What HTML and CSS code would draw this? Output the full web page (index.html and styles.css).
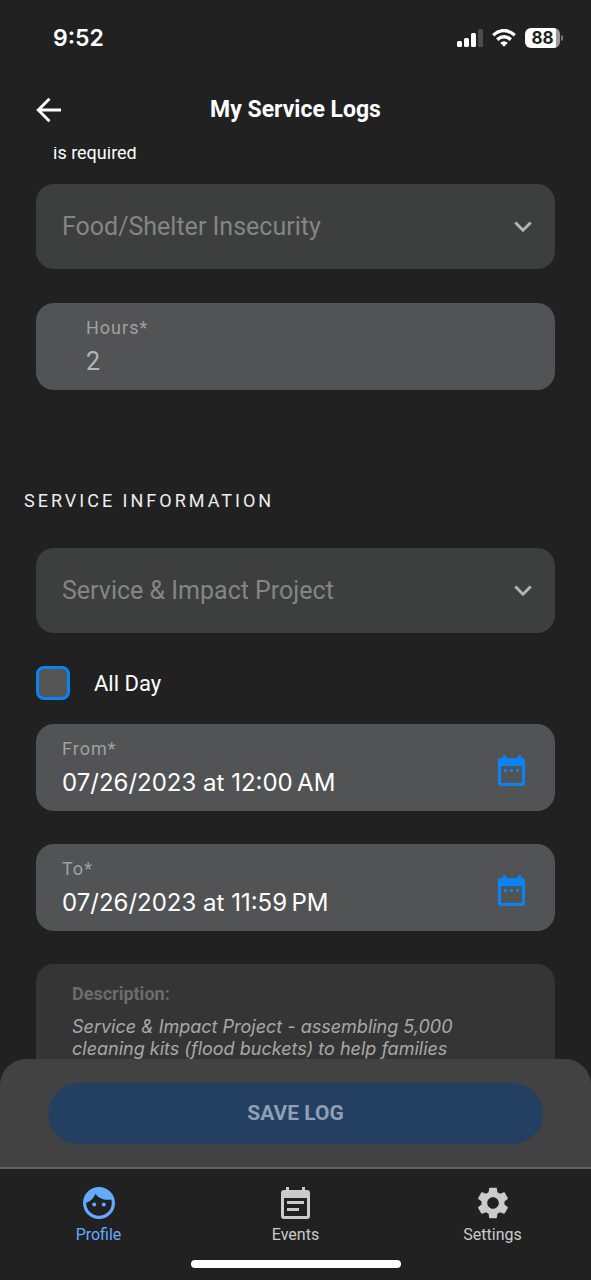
FILE: index.html
```html
<!DOCTYPE html>
<html lang="en">
<head>
<meta charset="utf-8">
<meta name="viewport" content="width=device-width, initial-scale=1">
<title>My Service Logs</title>
<link rel="stylesheet" href="styles.css">
</head>
<body>
<div class="app">
  <div class="status">
    <span class="clock">9:52</span>
    <div class="indicators">
      <svg class="signal" viewBox="0 0 26 18" width="26" height="18" aria-hidden="true">
        <g fill="#fff"><rect x="0" y="12" width="5" height="6" rx="1.5"/><rect x="7" y="9" width="5" height="9" rx="1.5"/><rect x="14" y="4" width="5" height="14" rx="1.5"/></g>
        <rect x="21" y="0" width="5" height="18" rx="1.5" fill="#4c4c4c"/>
      </svg>
      <svg class="wifi" viewBox="0 0 24 18" width="24" height="18" aria-hidden="true">
        <g fill="none" stroke="#fff" stroke-width="3.4"><path d="M1.2 6.2Q12-3 22.8 6.2"/><path d="M5.2 10.6Q12 4.8 18.8 10.6"/></g>
        <path fill="#fff" d="M8.2 13.7Q12 10.6 15.8 13.7L12 17.8Z"/>
      </svg>
      <div class="battery"><span class="level">88</span><span class="cap"></span></div>
    </div>
  </div>

  <header class="topbar">
    <button class="back" type="button" aria-label="Back">
      <svg viewBox="0 0 26 26" width="26" height="26" aria-hidden="true"><path d="M25 13H2.5M13.5 1.8 2.3 13l11.2 11.2" fill="none" stroke="#fff" stroke-width="2.9"/></svg>
    </button>
    <h1 class="title">My Service Logs</h1>
  </header>

  <main class="content">
    <p class="hint">is required</p>

    <div class="picker">
      <select class="picker-value" aria-label="Category" disabled><option>Food/Shelter Insecurity</option></select>
      <svg class="chevron" viewBox="0 0 18 12" width="18" height="12" aria-hidden="true"><path d="M1.3 1.5 9 9.2l7.700-7.700" fill="none" stroke="#b4b4b4" stroke-width="3"/></svg>
    </div>

    <div class="field field-hours">
      <div class="field-text">
        <label class="field-label" for="hours">Hours*</label>
        <input class="field-value" id="hours" type="text" value="2" disabled>
      </div>
    </div>

    <h2 class="section">SERVICE INFORMATION</h2>

    <div class="picker">
      <select class="picker-value" aria-label="Project" disabled><option>Service &amp; Impact Project</option></select>
      <svg class="chevron" viewBox="0 0 18 12" width="18" height="12" aria-hidden="true"><path d="M1.3 1.5 9 9.2l7.700-7.700" fill="none" stroke="#b4b4b4" stroke-width="3"/></svg>
    </div>

    <div class="all-day">
      <input class="check" id="allday" type="checkbox">
      <label class="check-label" for="allday">All Day</label>
    </div>

    <div class="field">
      <div class="field-text">
        <label class="field-label" for="from">From*</label>
        <input class="field-value date" id="from" type="text" value="07/26/2023 at 12:00&#8239;AM">
      </div>
      <button class="calendar" type="button" aria-label="Choose start date">
        <svg viewBox="0 0 27 31" width="27" height="31" aria-hidden="true"><path fill="#0a84f5" fill-rule="evenodd" d="M5 0h3v3h12V0h3v3h1q3 0 3 3v22q0 3-3 3H3q-3 0-3-3V6q0-3 3-3h2ZM3 11v17h21V11ZM6 14h3v3H6ZM12 14h3v3h-3ZM18 14h3v3h-3Z"/></svg>
      </button>
    </div>

    <div class="field">
      <div class="field-text">
        <label class="field-label" for="to">To*</label>
        <input class="field-value date" id="to" type="text" value="07/26/2023 at 11:59&#8239;PM">
      </div>
      <button class="calendar" type="button" aria-label="Choose end date">
        <svg viewBox="0 0 27 31" width="27" height="31" aria-hidden="true"><path fill="#0a84f5" fill-rule="evenodd" d="M5 0h3v3h12V0h3v3h1q3 0 3 3v22q0 3-3 3H3q-3 0-3-3V6q0-3 3-3h2ZM3 11v17h21V11ZM6 14h3v3H6ZM12 14h3v3h-3ZM18 14h3v3h-3Z"/></svg>
      </button>
    </div>

    <section class="description">
      <h3 class="description-title">Description:</h3>
      <p class="description-text">Service &amp; Impact Project - assembling 5,000 cleaning kits (flood buckets) to help families</p>
    </section>
  </main>

  <div class="actions">
    <button class="save" type="button" disabled>SAVE LOG</button>
  </div>

  <footer class="footer">
    <nav class="tabs">
      <a class="tab active" href="#profile">
        <svg viewBox="2 2 20 20" width="32" height="32" aria-hidden="true"><path fill="currentColor" d="M10.250 13c0 .69-.56 1.250-1.250 1.250S7.750 13.690 7.750 13s.56-1.250 1.250-1.250 1.250.56 1.250 1.250zM15 11.750c-.69 0-1.250.56-1.250 1.250s.56 1.250 1.250 1.250 1.250-.56 1.250-1.250-.56-1.250-1.250-1.250zm7 .25c0 5.520-4.480 10-10 10S2 17.520 2 12 6.480 2 12 2s10 4.480 10 10zm-2 0c0-.78-.12-1.530-.33-2.240-.7.150-1.420.24-2.170.24-3.130 0-5.920-1.440-7.760-3.690C8.690 8.870 6.600 10.880 4 11.860c.01.040 0 .090 0 .140 0 4.410 3.590 8 8 8s8-3.590 8-8z"/></svg>
        <span class="tab-label">Profile</span>
      </a>
      <a class="tab" href="#events">
        <svg viewBox="0 0 30 32" width="30" height="32" aria-hidden="true"><path fill="currentColor" fill-rule="evenodd" d="M5 0h3v3h13V0h3v3h2q3 0 3 3v23q0 3-3 3H3q-3 0-3-3V6q0-3 3-3h2ZM3 11v18h23V11ZM6 14h17v3H6ZM6 21h12v3H6Z"/></svg>
        <span class="tab-label">Events</span>
      </a>
      <a class="tab" href="#settings">
        <svg viewBox="2 2 20 20" width="32" height="32" aria-hidden="true"><path fill="currentColor" d="M19.140 12.940c.04-.3.060-.61.060-.94 0-.32-.02-.64-.07-.94l2.030-1.580c.18-.14.230-.41.120-.61l-1.920-3.320c-.12-.22-.37-.29-.59-.22l-2.390.96c-.5-.38-1.030-.7-1.620-.94l-.36-2.540c-.04-.24-.24-.41-.48-.41h-3.840c-.24 0-.43.170-.47.410l-.36 2.540c-.59.240-1.130.57-1.620.94l-2.390-.96c-.22-.08-.47 0-.59.220L2.740 8.870c-.12.210-.08.470.120.610l2.030 1.580c-.05.3-.09.630-.09.940s.02.640.070.940l-2.030 1.580c-.18.140-.23.410-.12.610l1.920 3.320c.12.220.37.290.59.220l2.390-.96c.5.380 1.030.7 1.620.94l.36 2.540c.05.240.24.410.48.410h3.840c.24 0 .44-.17.470-.41l.36-2.540c.59-.24 1.130-.56 1.620-.94l2.390.96c.22.080.47 0 .59-.22l1.920-3.320c.12-.22.070-.47-.12-.61l-2.010-1.580zM12 15.600c-1.980 0-3.600-1.620-3.600-3.600s1.620-3.600 3.600-3.600 3.600 1.620 3.600 3.600-1.620 3.600-3.600 3.600z"/></svg>
        <span class="tab-label">Settings</span>
      </a>
    </nav>
    <div class="home-bar"></div>
  </footer>
</div>
</body>
</html>
```
FILE: styles.css
```css
* {
  box-sizing: border-box;
}

body {
  margin: 0;
  background: #212121;
  color: #fff;
  font-family: Roboto, "Liberation Sans", sans-serif;
}

h1, h2, h3, p {
  margin: 0;
}

button, input, select {
  margin: 0;
  padding: 0;
  border: 0;
  background: none;
  color: inherit;
  font-family: inherit;
}

svg {
  display: block;
}

.app {
  display: flex;
  flex-direction: column;
  height: 100vh;
}

/* Status bar */
.status {
  display: flex;
  align-items: center;
  justify-content: space-between;
  height: 76px;
  padding: 0 28px 0 53px;
}

.clock {
  font-family: Inter, sans-serif;
  font-size: 23px;
  font-weight: 600;
}

.indicators {
  display: flex;
  align-items: center;
  gap: 9px;
}

.battery {
  display: flex;
  align-items: center;
  gap: 1px;
}

.level {
  width: 35px;
  height: 20px;
  border-radius: 6px;
  background: linear-gradient(to right, #fff 88%, #999 88%);
  color: #212121;
  font-family: Inter, sans-serif;
  font-size: 17px;
  font-weight: 700;
  line-height: 20px;
  text-align: center;
}

.cap {
  width: 2px;
  height: 6px;
  border-radius: 0 2px 2px 0;
  background: #777;
}

/* Title bar */
.topbar {
  display: grid;
  grid-template-columns: 26px 1fr 26px;
  align-items: center;
  height: 71px;
  padding: 0 36px 4px;
}

.title {
  font-size: 23px;
  font-weight: 700;
  line-height: 28px;
  text-align: center;
}

/* Form */
.content {
  flex: 1;
  min-height: 0;
  overflow: hidden;
  padding: 0 36px;
}

.hint {
  margin: -5px 0 20px 17px;
  font-size: 18px;
  line-height: 22px;
}

.picker {
  display: flex;
  align-items: center;
  height: 85px;
  padding: 0 23px 0 26px;
  border-radius: 18px;
  background: #3d3f3e;
}

.picker-value {
  flex: 1;
  min-width: 0;
  height: 100%;
  appearance: none;
  color: #858585;
  font-size: 25px;
  opacity: 1;
}

.field {
  display: flex;
  align-items: center;
  height: 87px;
  margin-bottom: 33px;
  padding: 6px 30px 0 26px;
  border-radius: 18px;
  background: #525355;
}

.field-hours {
  margin: 34px 0 0;
  padding-left: 50px;
}

.field-text {
  display: flex;
  flex: 1;
  flex-direction: column;
  min-width: 0;
  padding-bottom: 4px;
  gap: 4px;
}

.field-label {
  color: #a0a0a0;
  font-size: 18px;
  letter-spacing: 1px;
  line-height: 24px;
}

.field-value {
  width: 100%;
  height: 36px;
  color: #b4b4b4;
  font-size: 25px;
}

.date {
  color: #fff;
  font-family: Inter, sans-serif;
  font-size: 24px;
}

.section {
  margin: 99px 0 35px -12px;
  font-size: 18px;
  font-weight: 400;
  letter-spacing: 3px;
  line-height: 24px;
  color: #eee;
}

.all-day {
  display: flex;
  align-items: center;
  gap: 24px;
  margin: 33px 0 24px;
}

.check {
  width: 34px;
  height: 34px;
  appearance: none;
  border: 3px solid #0a84f5;
  border-radius: 8px;
  background: #555;
}

.check-label {
  font-size: 22px;
}

.description {
  padding: 18px 36px;
  border-radius: 18px 18px 0 0;
  background: #353535;
}

.description-title {
  margin-bottom: 10px;
  color: #6c6c6c;
  font-size: 18px;
  font-weight: 700;
  line-height: 24px;
}

.description-text {
  color: #a8a8a8;
  font-family: Inter, sans-serif;
  font-size: 18px;
  font-style: italic;
  line-height: 22px;
}

/* Save panel */
.actions {
  padding: 24px 48px 23px;
  border-bottom: 2px solid #616161;
  border-radius: 26px 26px 0 0;
  background: #424242;
}

.save {
  display: block;
  width: 100%;
  height: 61px;
  padding-bottom: 2px;
  border-radius: 31px;
  background: #234063;
  color: #909fb3;
  font-size: 21px;
  font-weight: 700;
}

/* Bottom navigation */
.footer {
  display: flex;
  flex-direction: column;
  align-items: center;
  padding-bottom: 12px;
}

.tabs {
  display: grid;
  grid-template-columns: repeat(3, 1fr);
  width: 100%;
  padding: 18px 0 15px;
}

.tab {
  display: flex;
  flex-direction: column;
  align-items: center;
  gap: 6px;
  color: #cbcbcb;
  text-decoration: none;
}

.tab.active {
  color: #64abff;
}

.tab-label {
  font-size: 16px;
  line-height: 20px;
}

.home-bar {
  width: 210px;
  height: 8px;
  border-radius: 4px;
  background: #fff;
}
```
